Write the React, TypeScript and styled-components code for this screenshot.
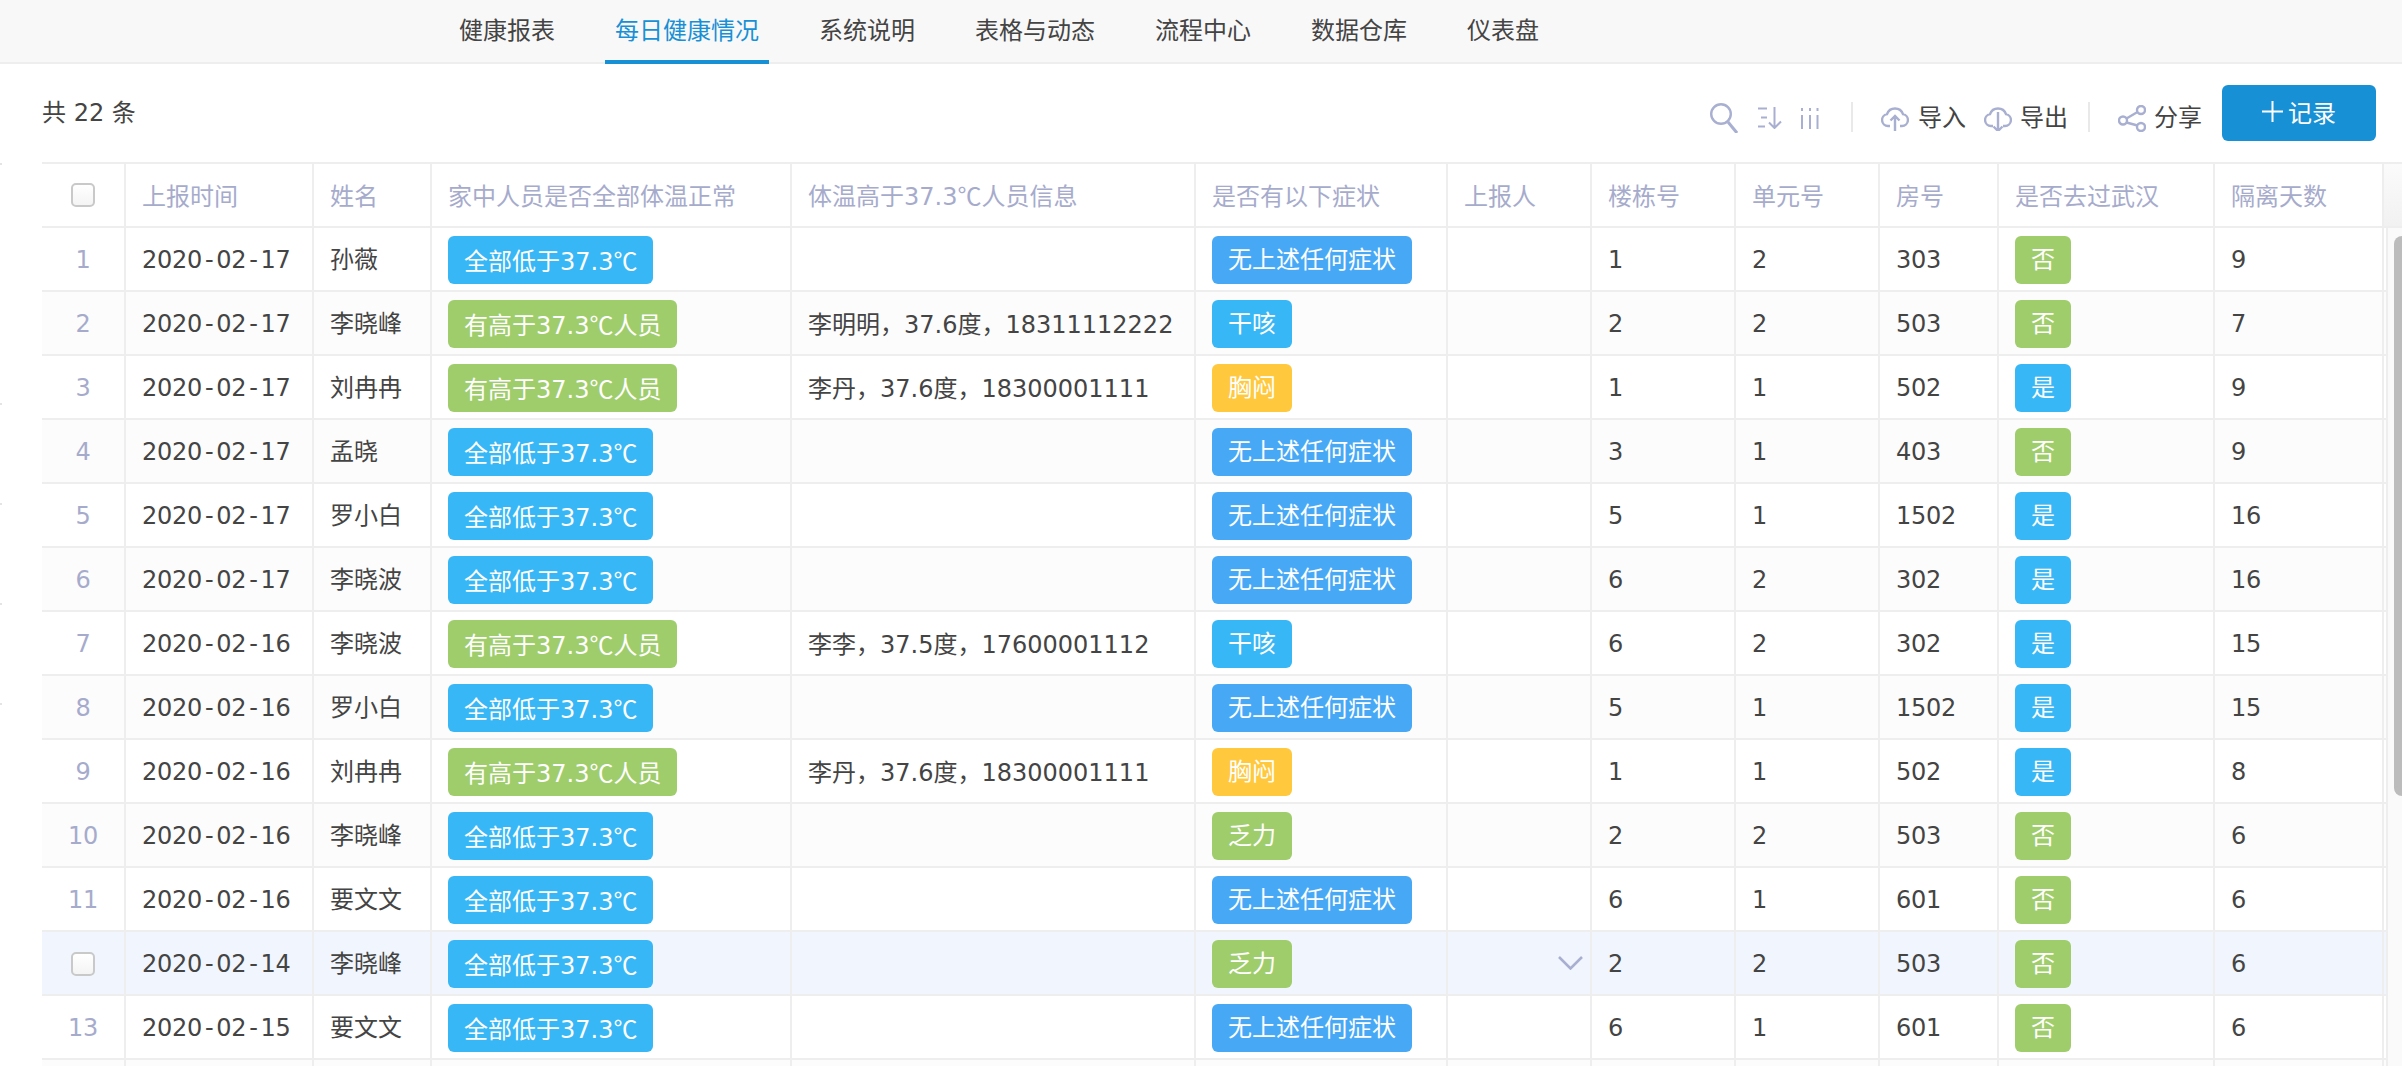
import React from "react";
import styled, { createGlobalStyle } from "styled-components";

const GlobalStyle = createGlobalStyle`
  html, body { margin: 0; padding: 0; background: #fff; }
  body { font-family: "DejaVu Sans", "Noto Sans CJK SC", sans-serif; color: #444; }
  * { box-sizing: border-box; }
`;

const Page = styled.div`
  position: relative;
  width: 2402px;
  height: 1066px;
  overflow: hidden;
  background: #fff;
  font-size: 24px;
  letter-spacing: -0.3px;
`;

const Tick = styled.i<{ $top: number }>`
  position: absolute;
  left: 0;
  top: ${(p) => p.$top}px;
  width: 2px;
  height: 2px;
  background: #e4e4e4;
`;

const Nav = styled.nav`
  display: flex;
  align-items: flex-start;
  height: 64px;
  padding-left: 429px;
  background: #f8f8f8;
  border-bottom: 2px solid #eeeeee;
`;

const Tab = styled.a<{ $active?: boolean }>`
  display: block;
  height: 64px;
  margin: 0 20px;
  padding: 3px 10px 0;
  line-height: 56px;
  letter-spacing: 0;
  color: ${(p) => (p.$active ? "#1890d5" : "#444")};
  border-bottom: 4px solid ${(p) => (p.$active ? "#1890d5" : "transparent")};
`;

const Toolbar = styled.div`
  display: flex;
  align-items: center;
  justify-content: space-between;
  height: 98px;
  padding: 0 26px 0 42px;
`;

const Total = styled.div`
  letter-spacing: 0;
  margin-top: -5px;
`;

const Tools = styled.div`
  display: flex;
  align-items: center;
  margin-top: 2px;
`;

const PlainIcon = styled.svg<{ $gap?: number }>`
  display: block;
  flex: none;
  margin-right: ${(p) => p.$gap ?? 0}px;
  fill: none;
  stroke: #a9afd0;
  stroke-width: 2.4;
`;

const ToolIcon = styled(PlainIcon)`
  margin-top: 8px;
`;

const VDivider = styled.span<{ $left: number; $right: number }>`
  width: 2px;
  height: 30px;
  margin: 6px ${(p) => p.$right}px 0 ${(p) => p.$left}px;
  background: #e9e9e9;
`;

const Action = styled.span<{ $gap: number; $after: number }>`
  display: flex;
  align-items: center;
  gap: ${(p) => p.$gap}px;
  margin: 8px ${(p) => p.$after}px 0 0;
  letter-spacing: 0;
  line-height: 30px;
`;

const AddButton = styled.button`
  display: flex;
  align-items: center;
  justify-content: center;
  gap: 5px;
  width: 154px;
  height: 56px;
  margin-top: -2px;
  padding: 0 0 4px;
  border: 0;
  border-radius: 6px;
  background: #1890d5;
  color: #fff;
  font: inherit;
  letter-spacing: 0;
`;

const TableWrap = styled.div`
  position: relative;
  display: flex;
  margin-left: 42px;
  border-top: 2px solid #eeeeee;
`;

const Rows = styled.div`
  flex: none;
  width: 2344px;
`;

const Row = styled.div<{ $even?: boolean; $hover?: boolean }>`
  display: grid;
  grid-template-columns: 84px 188px 118px 360px 404px 252px 144px 144px 144px 119px 216px 169px 2px;
  height: 64px;
  border-bottom: 2px solid #eeeeee;
  background: ${(p) => (p.$hover ? "#f1f6fe" : p.$even ? "#fcfcfc" : "#fff")};
`;

const Cell = styled.div<{ $center?: boolean; $index?: boolean; $end?: boolean }>`
  display: flex;
  align-items: center;
  justify-content: ${(p) => (p.$center ? "center" : p.$end ? "flex-end" : "flex-start")};
  min-width: 0;
  padding: ${(p) => (p.$end ? "0 7px 0 0" : p.$center ? "2px 0 0" : "2px 0 0 16px")};
  border-right: 2px solid #eeeeee;
  white-space: nowrap;
  color: ${(p) => (p.$index ? "#a6abcc" : "#444")};
`;

const HeadCell = styled.div<{ $center?: boolean }>`
  display: flex;
  align-items: center;
  justify-content: ${(p) => (p.$center ? "center" : "flex-start")};
  min-width: 0;
  padding: 0 0 ${(p) => (p.$center ? 0 : 2)}px ${(p) => (p.$center ? 0 : 16)}px;
  border-right: 2px solid #eeeeee;
  white-space: nowrap;
  letter-spacing: 0;
  color: #a6abcc;
`;

const Filler = styled.div``;

const NameText = styled.span`
  margin-bottom: 5px;
  letter-spacing: 0;
`;

const InfoText = styled.span`
  margin-bottom: 3px;
  letter-spacing: 0;
`;

const DateDash = styled.span`
  margin: 0 3px;
`;

const Tag = styled.span<{ $color: string }>`
  display: inline-block;
  height: 48px;
  padding: 0 16px;
  border-radius: 6px;
  background: ${(p) => p.$color};
  color: #fff;
  line-height: 48px;
  letter-spacing: 0;
`;

const Celsius = styled.span`
  font-family: "Noto Sans CJK SC", sans-serif;
`;

const CheckBox = styled.input.attrs({ type: "checkbox" })`
  appearance: none;
  display: block;
  width: 24px;
  height: 24px;
  margin: 0;
  border: 2px solid #c9c9c9;
  border-radius: 5px;
  background: linear-gradient(#fff, #f4f4f4);
`;

const Rail = styled.div`
  flex: none;
  width: 16px;
  margin-top: 64px;
  padding-top: 8px;
  border-left: 2px solid #eeeeee;
  background: #fafafa;
`;

const RailThumb = styled.div`
  width: 8px;
  height: 560px;
  margin-left: auto;
  border-radius: 8px 0 0 8px;
  background: #bcbcbc;
`;

const RailCorner = styled.div`
  position: absolute;
  top: 0;
  right: 0;
  width: 18px;
  height: 64px;
  border-bottom: 2px solid #eeeeee;
  background: linear-gradient(#fbfbfb, #f1f1f1);
`;

const SearchIcon = () => (
  <ToolIcon $gap={20} width="28" height="30" viewBox="0 0 28 30">
    <circle cx="11" cy="11" r="9.8" />
    <path d="M18 19l9 11" strokeWidth="3" />
  </ToolIcon>
);
const SortIcon = () => (
  <ToolIcon $gap={17} width="25" height="22" viewBox="0 0 25 22">
    <path d="M0 1.5h9M3 10.5h6M0 19.5h7M16.5 0v21M11 15.5l5.5 5.5 6.5-6.5" strokeWidth="2" />
  </ToolIcon>
);
const ColumnsIcon = () => (
  <ToolIcon width="20" height="21" viewBox="0 0 20 21">
    <path d="M2 0v3M2 7v14M10 0v3M10 7v14M17.5 0v3M17.5 7v14" strokeWidth="2" />
  </ToolIcon>
);
const CloudUp = () => (
  <PlainIcon width="28" height="25" viewBox="0 0 28 25">
    <path d="M9 20H7a6 6 0 0 1-1-11.9A8.5 8.5 0 0 1 22 8.1 6 6 0 0 1 21 20h-2" />
    <path d="M14 25V10M9.5 14.5L14 10l4.5 4.5" />
  </PlainIcon>
);
const CloudDown = () => (
  <PlainIcon width="28" height="25" viewBox="0 0 28 25">
    <path d="M9 20H7a6 6 0 0 1-1-11.9A8.5 8.5 0 0 1 22 8.1 6 6 0 0 1 21 20h-2" />
    <path d="M14 6v19M9.5 20.5L14 25l4.5-4.5" />
  </PlainIcon>
);
const ShareIcon = () => (
  <PlainIcon width="28" height="27" viewBox="0 0 28 27">
    <circle cx="23" cy="5" r="4" />
    <circle cx="5" cy="15.5" r="4" />
    <circle cx="23" cy="22" r="4" />
    <path d="M8.5 13.5L19.5 7M8.5 17.5l11 3" />
  </PlainIcon>
);
const PlusIcon = () => (
  <svg width="21" height="21" viewBox="0 0 21 21" fill="none" stroke="#fff" strokeWidth="2">
    <path d="M0 10.5h21M10.5 0v21" />
  </svg>
);
const ChevronIcon = () => (
  <PlainIcon width="25" height="14" viewBox="0 0 25 14">
    <path d="M1 1l11.5 11.5L24 1" strokeWidth="2.6" />
  </PlainIcon>
);

const SKY = "#37b7f6";
const GREEN = "#a0cd6c";
const BLUE = "#47a9f5";
const YELLOW = "#ffc83d";

const symptomColor: Record<string, string> = {
  无上述任何症状: BLUE,
  干咳: SKY,
  胸闷: YELLOW,
  乏力: GREEN,
};

type Rec = [string, string, boolean, string, string, string, string, string, string, string];

const LOW = "全部低于37.3";
const HIGH = "有高于37.3";
const NONE = "无上述任何症状";

const data: Rec[] = [
  ["2020-02-17", "孙薇", false, "", NONE, "1", "2", "303", "否", "9"],
  ["2020-02-17", "李晓峰", true, "李明明，37.6度，18311112222", "干咳", "2", "2", "503", "否", "7"],
  ["2020-02-17", "刘冉冉", true, "李丹，37.6度，18300001111", "胸闷", "1", "1", "502", "是", "9"],
  ["2020-02-17", "孟晓", false, "", NONE, "3", "1", "403", "否", "9"],
  ["2020-02-17", "罗小白", false, "", NONE, "5", "1", "1502", "是", "16"],
  ["2020-02-17", "李晓波", false, "", NONE, "6", "2", "302", "是", "16"],
  ["2020-02-16", "李晓波", true, "李李，37.5度，17600001112", "干咳", "6", "2", "302", "是", "15"],
  ["2020-02-16", "罗小白", false, "", NONE, "5", "1", "1502", "是", "15"],
  ["2020-02-16", "刘冉冉", true, "李丹，37.6度，18300001111", "胸闷", "1", "1", "502", "是", "8"],
  ["2020-02-16", "李晓峰", false, "", "乏力", "2", "2", "503", "否", "6"],
  ["2020-02-16", "要文文", false, "", NONE, "6", "1", "601", "否", "6"],
  ["2020-02-14", "李晓峰", false, "", "乏力", "2", "2", "503", "否", "6"],
  ["2020-02-15", "要文文", false, "", NONE, "6", "1", "601", "否", "6"],
];

const headers: React.ReactNode[] = [
  "上报时间",
  "姓名",
  "家中人员是否全部体温正常",
  <span key="temp">
    体温高于37.3<Celsius>℃</Celsius>人员信息
  </span>,
  "是否有以下症状",
  "上报人",
  "楼栋号",
  "单元号",
  "房号",
  "是否去过武汉",
  "隔离天数",
];

const tabs = ["健康报表", "每日健康情况", "系统说明", "表格与动态", "流程中心", "数据仓库", "仪表盘"];

const DateText = ({ value }: { value: string }) => {
  const [y, m, d] = value.split("-");
  return (
    <span>
      {y}
      <DateDash>-</DateDash>
      {m}
      <DateDash>-</DateDash>
      {d}
    </span>
  );
};

const HOVER_INDEX = 11;

export default function App() {
  return (
    <Page>
      <GlobalStyle />
      {[163, 403, 503, 603, 703].map((t) => (
        <Tick key={t} $top={t} />
      ))}
      <Nav>
        {tabs.map((t) => (
          <Tab key={t} $active={t === "每日健康情况"}>
            {t}
          </Tab>
        ))}
      </Nav>
      <Toolbar>
        <Total>共 22 条</Total>
        <Tools>
          <SearchIcon />
          <SortIcon />
          <ColumnsIcon />
          <VDivider $left={31} $right={28} />
          <Action $gap={9} $after={18}>
            <CloudUp />
            导入
          </Action>
          <Action $gap={8} $after={0}>
            <CloudDown />
            导出
          </Action>
          <VDivider $left={20} $right={28} />
          <Action $gap={8} $after={20}>
            <ShareIcon />
            分享
          </Action>
          <AddButton>
            <PlusIcon />
            记录
          </AddButton>
        </Tools>
      </Toolbar>
      <TableWrap>
        <Rows>
          <Row>
            <HeadCell $center>
              <CheckBox />
            </HeadCell>
            {headers.map((h, i) => (
              <HeadCell key={i}>{h}</HeadCell>
            ))}
            <Filler />
          </Row>
          {data.map((r, i) => {
            const hover = i === HOVER_INDEX;
            const [date, name, high, info, symptom, building, unit, room, wuhan, days] = r;
            return (
              <Row key={i} $even={i % 2 === 1} $hover={hover}>
                <Cell $center $index>
                  {hover ? <CheckBox /> : i + 1}
                </Cell>
                <Cell>
                  <DateText value={date} />
                </Cell>
                <Cell>
                  <NameText>{name}</NameText>
                </Cell>
                <Cell>
                  <Tag $color={high ? GREEN : SKY}>
                    {high ? HIGH : LOW}
                    <Celsius>℃</Celsius>
                    {high ? "人员" : ""}
                  </Tag>
                </Cell>
                <Cell>
                  <InfoText>{info}</InfoText>
                </Cell>
                <Cell>
                  <Tag $color={symptomColor[symptom]}>{symptom}</Tag>
                </Cell>
                <Cell $end={hover}>{hover ? <ChevronIcon /> : null}</Cell>
                <Cell>{building}</Cell>
                <Cell>{unit}</Cell>
                <Cell>{room}</Cell>
                <Cell>
                  <Tag $color={wuhan === "否" ? GREEN : SKY}>{wuhan}</Tag>
                </Cell>
                <Cell>{days}</Cell>
                <Filler />
              </Row>
            );
          })}
          <Row $even>
            {Array.from({ length: 12 }, (_, i) => (
              <Cell key={i} />
            ))}
            <Filler />
          </Row>
        </Rows>
        <Rail>
          <RailThumb />
        </Rail>
        <RailCorner />
      </TableWrap>
    </Page>
  );
}
